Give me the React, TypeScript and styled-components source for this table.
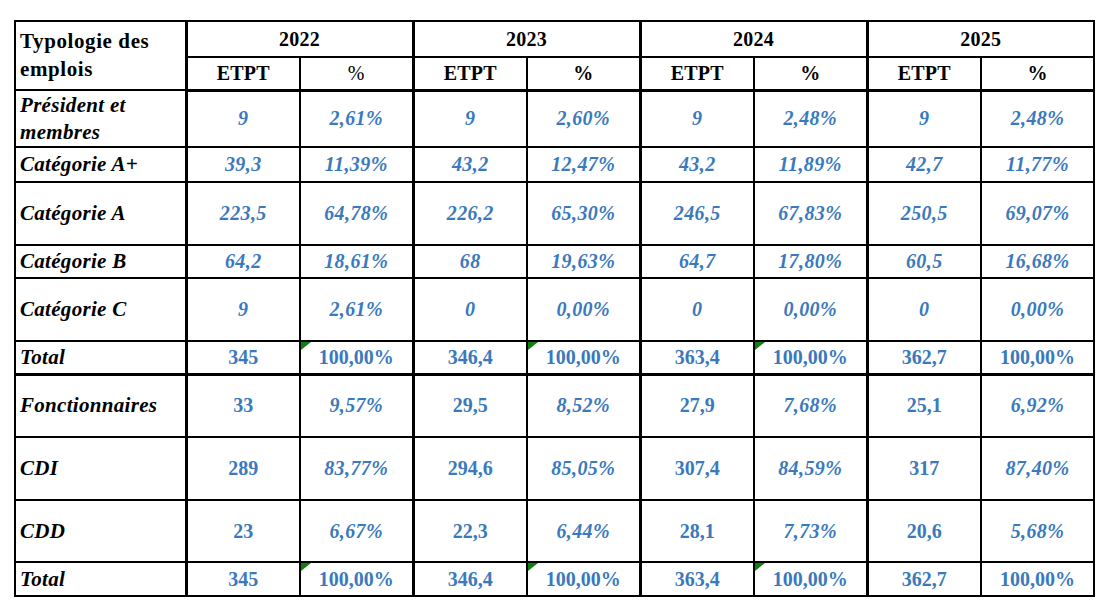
import React from 'react'
import styled, { createGlobalStyle } from 'styled-components'

const GlobalStyle = createGlobalStyle`
    html, body {
        margin: 0;
        padding: 0;
        background: #fff;
    }
`

const Page = styled.div`
    padding: 20px 0 0 14px;
    font-family: 'Liberation Serif', 'Times New Roman', serif;
`

const Table = styled.table`
    border-collapse: collapse;
    table-layout: fixed;
    width: 1079px;
    font-size: 20px;
    color: #000;
`

const Row = styled.tr<{ $h: number; $thick?: boolean }>`
    height: ${(p) => p.$h}px;
    & > td, & > th {
        border-bottom: ${(p) => (p.$thick ? 3 : 2)}px solid #000;
    }
`

const HeadCell = styled.th<{ $light?: boolean; $group?: boolean }>`
    border: 2px solid #000;
    ${(p) => (p.$group ? 'border-left-width: 3px;' : '')}
    font-weight: ${(p) => (p.$light ? 400 : 700)};
    text-align: center;
    vertical-align: middle;
    padding: 0;
    line-height: 26px;
    letter-spacing: 0.2px;
`

const LabelHead = styled.th`
    border: 2px solid #000;
    border-right-width: 3px;
    border-bottom-width: 3px;
    font-size: 21px;
    letter-spacing: 0.6px;
    font-weight: 700;
    text-align: left;
    vertical-align: top;
    padding: 5px 4px 0 4px;
    line-height: 28px;
`

const Label = styled.td`
    border: 2px solid #000;
    border-right-width: 3px;
    font-size: 21px;
    letter-spacing: 0.3px;
    font-weight: 700;
    font-style: italic;
    text-align: left;
    padding: 0 4px;
    line-height: 27px;
    vertical-align: middle;
`

const Value = styled.td<{ $upright?: boolean; $group?: boolean; $flag?: boolean }>`
    position: relative;
    border: 2px solid #000;
    ${(p) => (p.$group ? 'border-left-width: 3px;' : '')}
    color: #3a79bd;
    font-weight: 700;
    font-style: ${(p) => (p.$upright ? 'normal' : 'italic')};
    letter-spacing: ${(p) => (p.$upright ? 0 : 0.4)}px;
    text-align: center;
    vertical-align: middle;
    padding: 0;

    &::before {
        content: '';
        display: ${(p) => (p.$flag ? 'block' : 'none')};
        position: absolute;
        top: 0;
        left: 0;
        border-top: 8px solid #127d12;
        border-right: 10px solid transparent;
    }
`

type Line = {
    label: React.ReactNode
    values: string[]
    h: number
    total?: boolean
    uprightEtpt?: boolean
    thick?: boolean
}

const years = ['2022', '2023', '2024', '2025']

const lines: Line[] = [
    { label: <>Président et<br />membres</>, values: ['9', '2,61%', '9', '2,60%', '9', '2,48%', '9', '2,48%'], h: 57 },
    { label: 'Catégorie A+', values: ['39,3', '11,39%', '43,2', '12,47%', '43,2', '11,89%', '42,7', '11,77%'], h: 35 },
    { label: 'Catégorie A', values: ['223,5', '64,78%', '226,2', '65,30%', '246,5', '67,83%', '250,5', '69,07%'], h: 63 },
    { label: 'Catégorie B', values: ['64,2', '18,61%', '68', '19,63%', '64,7', '17,80%', '60,5', '16,68%'], h: 33 },
    { label: 'Catégorie C', values: ['9', '2,61%', '0', '0,00%', '0', '0,00%', '0', '0,00%'], h: 63 },
    { label: 'Total', values: ['345', '100,00%', '346,4', '100,00%', '363,4', '100,00%', '362,7', '100,00%'], h: 33, total: true, thick: true },
    { label: 'Fonctionnaires', values: ['33', '9,57%', '29,5', '8,52%', '27,9', '7,68%', '25,1', '6,92%'], h: 63, uprightEtpt: true },
    { label: 'CDI', values: ['289', '83,77%', '294,6', '85,05%', '307,4', '84,59%', '317', '87,40%'], h: 63, uprightEtpt: true },
    { label: 'CDD', values: ['23', '6,67%', '22,3', '6,44%', '28,1', '7,73%', '20,6', '5,68%'], h: 62, uprightEtpt: true },
    { label: 'Total', values: ['345', '100,00%', '346,4', '100,00%', '363,4', '100,00%', '362,7', '100,00%'], h: 34, total: true },
]

function App(): JSX.Element {
    return (
        <Page>
            <GlobalStyle />
            <Table>
                <colgroup>
                    <col style={{ width: 171 }} />
                    {years.map((y) => (
                        <React.Fragment key={y}>
                            <col style={{ width: 114 }} />
                            <col style={{ width: 113 }} />
                        </React.Fragment>
                    ))}
                </colgroup>
                <thead>
                    <Row $h={36}>
                        <LabelHead rowSpan={2}>Typologie des<br />emplois</LabelHead>
                        {years.map((y, i) => (
                            <HeadCell key={y} colSpan={2} $group={i > 0}>{y}</HeadCell>
                        ))}
                    </Row>
                    <Row $h={33} $thick>
                        {years.map((y, i) => (
                            <React.Fragment key={y}>
                                <HeadCell $group={i > 0}>ETPT</HeadCell>
                                <HeadCell $light={i === 0}>%</HeadCell>
                            </React.Fragment>
                        ))}
                    </Row>
                </thead>
                <tbody>
                    {lines.map((line, r) => (
                        <Row key={r} $h={line.h} $thick={line.thick}>
                            <Label>{line.label}</Label>
                            {line.values.map((v, c) => (
                                <Value
                                    key={c}
                                    $group={c > 0 && c % 2 === 0}
                                    $upright={line.total || (line.uprightEtpt && c % 2 === 0)}
                                    $flag={line.total && c % 2 === 1 && c < 7}
                                >
                                    {v}
                                </Value>
                            ))}
                        </Row>
                    ))}
                </tbody>
            </Table>
        </Page>
    )
}

export default App
